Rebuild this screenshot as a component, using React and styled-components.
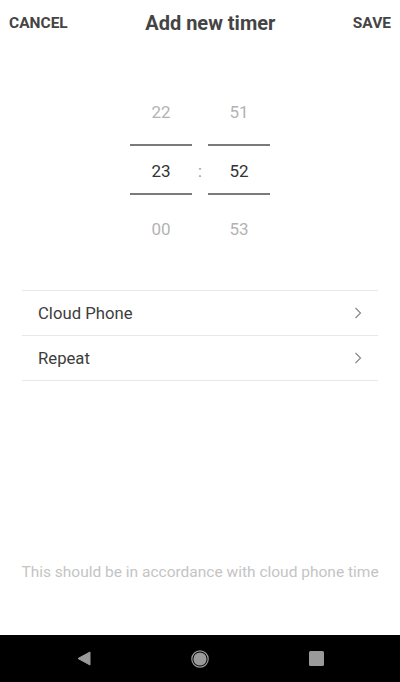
import React from "react";
import styled, { createGlobalStyle } from "styled-components";

const GlobalStyle = createGlobalStyle`
  html, body {
    margin: 0;
    padding: 0;
    background: #fff;
  }
  body {
    font-family: Roboto, "Noto Sans", "Liberation Sans", sans-serif;
  }
`;

const Screen = styled.div`
  width: 400px;
  height: 682px;
  display: flex;
  flex-direction: column;
  background: #fff;
  overflow: hidden;
`;

const Header = styled.header`
  height: 45px;
  display: flex;
  align-items: center;
  justify-content: space-between;
  padding: 0 9px;
`;

const HeaderButton = styled.button`
  border: none;
  background: none;
  padding: 0;
  font-family: inherit;
  font-size: 15.5px;
  font-weight: 700;
  color: #444;
`;

const Title = styled.h1`
  margin: 0;
  font-size: 20px;
  font-weight: 700;
  color: #444;
`;

const Picker = styled.div`
  margin-top: 45px;
  display: flex;
  justify-content: center;
  align-items: center;
  gap: 4px;
`;

const Column = styled.div`
  width: 62px;
  display: flex;
  flex-direction: column;
  align-items: center;
`;

const Cell = styled.div`
  height: 44px;
  width: 100%;
  display: flex;
  align-items: center;
  justify-content: center;
  font-size: 17px;
  color: #b3b3b3;
`;

const ActiveCell = styled(Cell)`
  box-sizing: border-box;
  height: 51px;
  padding-top: 2px;
  margin: 10px 0 12px;
  color: #333;
  border-top: 2px solid #7a7a7a;
  border-bottom: 2px solid #7a7a7a;
`;

const Colon = styled.div`
  width: 8px;
  padding-top: 2px;
  text-align: center;
  font-size: 16px;
  color: #999;
`;

const List = styled.ul`
  list-style: none;
  margin: 39px 22px 0;
  padding: 0;
  border-top: 1px solid #e8e8e8;
`;

const Row = styled.li`
  height: 44px;
  display: flex;
  align-items: center;
  justify-content: space-between;
  padding: 0 16px;
  border-bottom: 1px solid #e8e8e8;
  font-size: 16.7px;
  color: #3d3d3d;
`;

const Spacer = styled.div`
  flex: 1;
`;

const Note = styled.p`
  margin: 0 0 54px;
  text-align: center;
  font-size: 15.5px;
  color: #c4c4c4;
`;

const NavBar = styled.nav`
  height: 47px;
  background: #000;
  display: grid;
  grid-template-columns: repeat(3, 116px);
  justify-content: center;
  justify-items: center;
  align-items: center;
`;

const Chevron = () => (
  <svg width="8" height="12" viewBox="0 0 8 12">
    <path d="M1.5 1 L6.5 6 L1.5 11" fill="none" stroke="#888" strokeWidth="1.2" />
  </svg>
);

const hours = ["22", "23", "00"];
const minutes = ["51", "52", "53"];

const PickerColumn = ({ values }) => (
  <Column>
    <Cell>{values[0]}</Cell>
    <ActiveCell>{values[1]}</ActiveCell>
    <Cell>{values[2]}</Cell>
  </Column>
);

const App = () => (
  <Screen>
    <GlobalStyle />
    <Header>
      <HeaderButton>CANCEL</HeaderButton>
      <Title>Add new timer</Title>
      <HeaderButton>SAVE</HeaderButton>
    </Header>
    <Picker>
      <PickerColumn values={hours} />
      <Colon>:</Colon>
      <PickerColumn values={minutes} />
    </Picker>
    <List>
      <Row>
        Cloud Phone <Chevron />
      </Row>
      <Row>
        Repeat <Chevron />
      </Row>
    </List>
    <Spacer />
    <Note>This should be in accordance with cloud phone time</Note>
    <NavBar>
      <svg width="14" height="15" viewBox="0 0 14 15">
        <path d="M13 1 L13 14 L1 7.5 Z" fill="#9a9a9a" stroke="#9a9a9a" strokeWidth="1" strokeLinejoin="round" />
      </svg>
      <svg width="18" height="18" viewBox="0 0 18 18">
        <circle cx="9" cy="9" r="8.2" fill="none" stroke="#9a9a9a" strokeWidth="1.2" />
        <circle cx="9" cy="9" r="6.6" fill="#9a9a9a" />
      </svg>
      <svg width="15" height="15" viewBox="0 0 15 15">
        <rect x="0" y="0" width="15" height="15" rx="1.5" fill="#9a9a9a" />
      </svg>
    </NavBar>
  </Screen>
);

export default App;
